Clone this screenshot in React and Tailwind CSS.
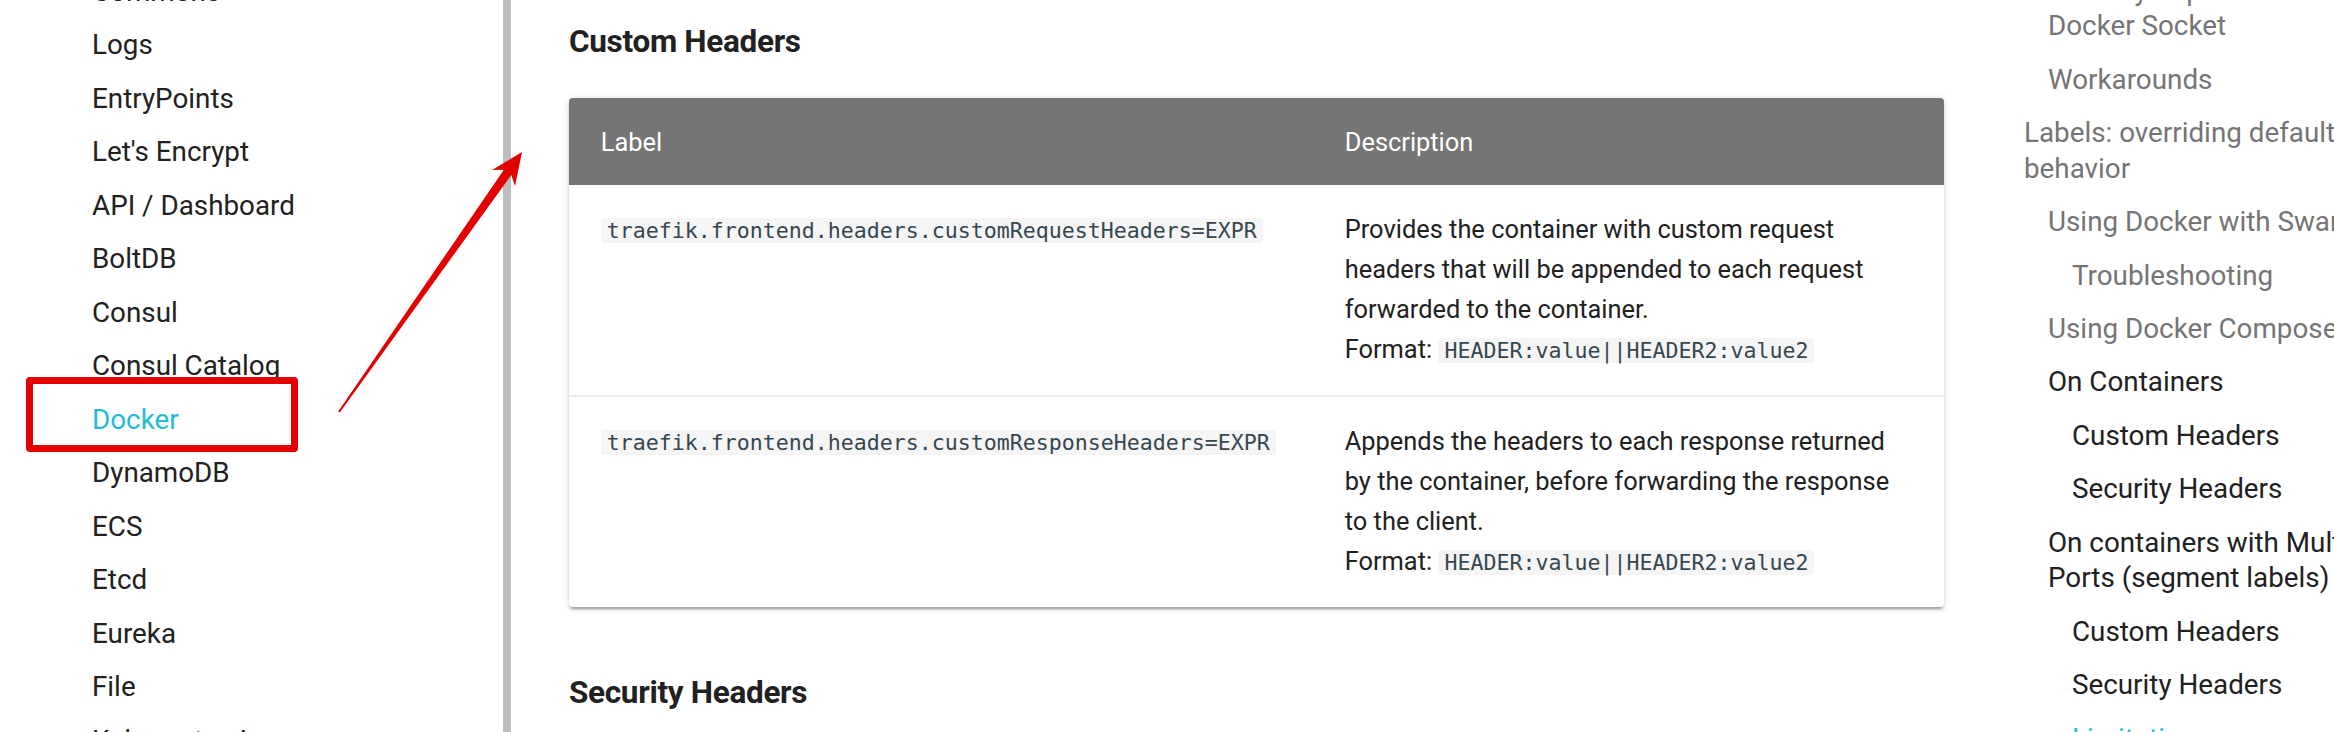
const navItems = [
  'Commons',
  'Logs',
  'EntryPoints',
  "Let's Encrypt",
  'API / Dashboard',
  'BoltDB',
  'Consul',
  'Consul Catalog',
  'Docker',
  'DynamoDB',
  'ECS',
  'Etcd',
  'Eureka',
  'File',
  'Kubernetes Ingress'
]

const tocItems = [
  { lines: ['Security Improvement on the', 'Docker Socket'], level: 2, tone: 'passed' },
  { lines: ['Workarounds'], level: 2, tone: 'passed' },
  { lines: ['Labels: overriding default', 'behavior'], level: 1, tone: 'passed' },
  { lines: ['Using Docker with Swarm Mode'], level: 2, tone: 'passed' },
  { lines: ['Troubleshooting'], level: 3, tone: 'passed' },
  { lines: ['Using Docker Compose'], level: 2, tone: 'passed' },
  { lines: ['On Containers'], level: 2, tone: 'normal' },
  { lines: ['Custom Headers'], level: 3, tone: 'normal' },
  { lines: ['Security Headers'], level: 3, tone: 'normal' },
  { lines: ['On containers with Multiple', 'Ports (segment labels)'], level: 2, tone: 'normal' },
  { lines: ['Custom Headers'], level: 3, tone: 'normal' },
  { lines: ['Security Headers'], level: 3, tone: 'normal' },
  { lines: ['Limitations'], level: 3, tone: 'active' }
]

const levelPad = { 1: 'pl-0', 2: 'pl-[24px]', 3: 'pl-[48px]' }
const toneColor = { passed: 'text-[#757575]', normal: 'text-[#212121]', active: 'text-[#1fbcd6]' }

const rows = [
  {
    label: 'traefik.frontend.headers.customRequestHeaders=EXPR',
    desc: ['Provides the container with custom request', 'headers that will be appended to each request', 'forwarded to the container.']
  },
  {
    label: 'traefik.frontend.headers.customResponseHeaders=EXPR',
    desc: ['Appends the headers to each response returned', 'by the container, before forwarding the response', 'to the client.']
  }
]

function Code({ children }) {
  return (
    <code className="rounded-[3px] bg-[#f5f5f5] px-[6px] font-['DejaVu_Sans_Mono',monospace] text-[21.6px] text-[#37474f]">
      {children}
    </code>
  )
}

export default function App() {
  return (
    <div className="relative flex h-[732px] w-[2334px] overflow-hidden bg-white font-['Roboto',sans-serif]">
      {/* left navigation */}
      <nav className="w-[503px] shrink-0 pl-[92px]">
        <ul className="-mt-[26px] flex flex-col gap-[17.7px] text-[27.8px] leading-[35.8px] text-[#212121]">
          {navItems.map(item => (
            <li key={item} className={item === 'Docker' ? 'text-[#1fbcd6]' : ''}>
              {item}
            </li>
          ))}
        </ul>
      </nav>

      {/* sidebar scrollbar */}
      <div className="w-[8px] shrink-0 bg-[#bdbdbd]" />

      {/* article */}
      <main className="w-[1489px] shrink-0 pl-[58px] pt-[22px] text-[#212121]">
        <h3 className="text-[31.5px] font-bold leading-[40px] tracking-[-0.01em]">Custom Headers</h3>

        <div className="mt-[36px] w-[1375px] overflow-hidden rounded-[4px] bg-white shadow-[0_3px_3px_0_rgba(0,0,0,0.14),0_1px_8px_0_rgba(0,0,0,0.12),0_4px_2px_-2px_rgba(0,0,0,0.2)]">
          <div className="grid grid-cols-[744px_1fr] bg-[#757575] text-[25.4px] leading-[40px] text-white">
            <div className="px-[31.75px] py-[23.5px]">Label</div>
            <div className="px-[31.75px] py-[23.5px]">Description</div>
          </div>
          {rows.map((row, i) => (
            <div
              key={row.label}
              className={`grid grid-cols-[744px_1fr] text-[25.4px] leading-[40px] ${i > 0 ? 'border-t-2 border-[#ededed]' : ''}`}
            >
              <div className="px-[31.75px] py-[24px]">
                <Code>{row.label}</Code>
              </div>
              <div className="whitespace-nowrap px-[31.75px] py-[24px]">
                {row.desc.map(line => (
                  <div key={line}>{line}</div>
                ))}
                <div>
                  Format: <Code>HEADER:value||HEADER2:value2</Code>
                </div>
              </div>
            </div>
          ))}
        </div>

        <h3 className="mt-[66px] text-[31.5px] font-bold leading-[40px] tracking-[-0.01em]">Security Headers</h3>
      </main>

      {/* table of contents */}
      <aside className="flex-1 pl-[24px]">
        <ul className="-mt-[27.5px] flex flex-col gap-[17.6px] whitespace-nowrap text-[27.8px] leading-[35.8px]">
          {tocItems.map((item, i) => (
            <li key={i} className={`${levelPad[item.level]} ${toneColor[item.tone]}`}>
              {item.lines.map(line => (
                <div key={line}>{line}</div>
              ))}
            </li>
          ))}
        </ul>
      </aside>

      {/* annotation: red box around Docker */}
      <div className="pointer-events-none absolute left-[26px] top-[377px] h-[75px] w-[272px] rounded-[4px] border-[7px] border-[#e30000]" />

      {/* annotation: arrow */}
      <svg className="pointer-events-none absolute left-0 top-0" width="2334" height="732" viewBox="0 0 2334 732">
        <polygon
          fill="#e30000"
          points="522,152 515,186.3 511.3,175 339.8,412.6 338.2,411.4 503.9,169.8 492.2,170.1"
        />
      </svg>
    </div>
  )
}
